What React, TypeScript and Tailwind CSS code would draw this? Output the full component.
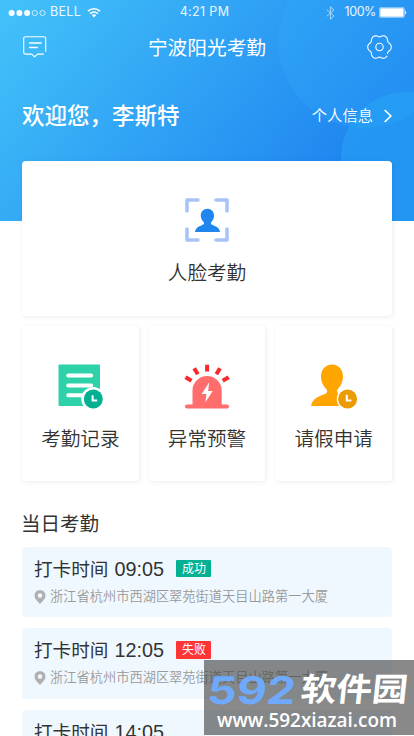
import type { ReactNode } from 'react';
import { clsx } from 'clsx';

interface AttendanceRecord {
  time: string;
  status?: 'success' | 'failed';
  address: string;
}

const ADDRESS = '浙江省杭州市西湖区翠苑街道天目山路第一大厦';

const RECORDS: AttendanceRecord[] = [
  { time: '09:05', status: 'success', address: ADDRESS },
  { time: '12:05', status: 'failed', address: ADDRESS },
  { time: '14:05', address: ADDRESS },
];

const STATUS_LABELS = {
  success: '成功',
  failed: '失败',
};

/* Status bar */
function StatusBar() {
  return (
    <div className="grid h-[25px] grid-cols-[1fr_60px_1fr] items-center pl-2 pr-[7px] text-[12.5px] leading-none text-white/90">
      <div className="flex items-center">
        <svg width="39" height="8" viewBox="0 0 39 8">
          <circle cx="3.6" cy="4" r="3" fill="#fff" />
          <circle cx="11.4" cy="4" r="3" fill="#fff" />
          <circle cx="19.1" cy="4" r="3" fill="#fff" />
          <circle cx="26.8" cy="4" r="2.6" fill="none" stroke="#fff" strokeWidth="0.7" />
          <circle cx="34.5" cy="4" r="2.6" fill="none" stroke="#fff" strokeWidth="0.7" />
        </svg>
        <span className="ml-[3px] tracking-[0.3px]">BELL</span>
        <svg className="ml-[6px]" width="14" height="11" viewBox="0 0 14 11" fill="none" stroke="#fff" strokeWidth="1.7">
          <path d="M1 4.2C4.4.9 9.6.9 13 4.2" />
          <path d="M3.2 6.5C5.4 4.5 8.6 4.5 10.8 6.5" />
          <path d="M4.8 8.1C6 7 8 7 9.2 8.1L7 10.4Z" fill="#fff" stroke="none" />
        </svg>
      </div>
      <span className="-ml-1.5 whitespace-nowrap text-center tracking-[0.35px]">4:21 PM</span>
      <div className="flex items-center justify-end">
        <svg className="mr-[-2px] opacity-60" width="9" height="14" viewBox="0 0 9 14" fill="none" stroke="#fff" strokeWidth="1">
          <path d="M.8 3.8 8 10 4.4 13.2V.8L8 4 .8 10.2" />
        </svg>
        <span className="ml-[11px] tracking-[-0.4px]">100%</span>
        <svg className="ml-[3px]" width="28" height="11" viewBox="0 0 28 11">
          <rect x="0.4" y="0.4" width="25" height="10.2" rx="1.5" fill="none" stroke="#fff" strokeOpacity="0.6" strokeWidth="0.8" />
          <rect x="1.2" y="1.2" width="23.4" height="8.6" rx="0.8" fill="#fff" />
          <path d="M26.2 3.5c1.3.5 1.3 3.5 0 4Z" fill="#fff" />
        </svg>
      </div>
    </div>
  );
}

function MessageIcon() {
  return (
    <svg width="24" height="24" viewBox="0 0 24 24" fill="none" stroke="#fff" strokeLinecap="round" strokeLinejoin="round">
      <path
        d="M22.7 15.2V2.5A1.8 1.8 0 0 0 20.9.7H2.5A1.8 1.8 0 0 0 .7 2.5v13.8A1.8 1.8 0 0 0 2.5 18.1h6.2l2.9 2.7 2.9-2.7h6"
        strokeWidth="1.1"
      />
      <path d="M6.6 7h11.4M6.6 11.4h7.6" strokeWidth="1.5" />
    </svg>
  );
}

// Six soft lobes, left open a little at the lower right
const GEAR_POINTS = Array.from({ length: 117 }, (_, i) => {
  const angle = ((50 + i * 3) * Math.PI) / 180;
  const radius = 10.9 + Math.cos(6 * angle) - 0.15 * Math.cos(12 * angle);
  const x = 12.5 + radius * Math.cos(angle);
  const y = 12 + radius * 1.04 * Math.sin(angle);
  return `${x.toFixed(2)},${y.toFixed(2)}`;
}).join(' ');

function SettingsIcon() {
  return (
    <svg width="25" height="25" viewBox="0 0 25 25" fill="none" stroke="#fff" strokeWidth="1.1" strokeLinecap="round" strokeLinejoin="round">
      <polyline points={GEAR_POINTS} />
      <circle cx="12.5" cy="12" r="3.7" />
    </svg>
  );
}

function FaceScanIcon() {
  return (
    <svg width="46" height="46" viewBox="0 0 46 46" fill="none">
      <path
        d="M3 14V3h11M32 3h11v11M43 32v11H32M14 43H3V32"
        stroke="#a7c4f9"
        strokeWidth="3.6"
        strokeLinecap="round"
        strokeLinejoin="round"
      />
      <path
        d="M23.4 11.7c4 0 6.6 2.9 6.6 6.9 0 2.7-1.1 5-2.7 6.4-.7.7-.6 2 .3 2.500 3.200 1.700 7.300 2.100 8.500 7.600H10.900c1.200-5.500 5.200-5.900 8.400-7.600.9-.5 1-1.800.3-2.500-1.600-1.400-2.800-3.700-2.800-6.400 0-4 2.600-6.900 6.600-6.900Z"
        fill="#1f86f0"
      />
    </svg>
  );
}

function RecordIcon() {
  return (
    <svg width="44" height="45" viewBox="0 0 44 45" className="overflow-visible">
      <rect x="0.5" y="0.5" width="41.5" height="41.5" rx="1" fill="#2ed2a8" />
      <path d="M10.2 11.6h23M10.2 21.5h23M10.2 31.3h14" stroke="#fff" strokeWidth="4" strokeLinecap="round" />
      <circle cx="35.3" cy="35" r="12" fill="#fff" />
      <circle cx="35.3" cy="35" r="9.5" fill="#03b091" />
      <path d="M34.6 31.3v5.2h4.6" stroke="#fff" strokeWidth="2" fill="none" />
    </svg>
  );
}

function AlarmIcon() {
  return (
    <svg width="46" height="45" viewBox="0 0 46 45">
      <path d="M8.5 41V26.5a14.6 14.6 0 0 1 29.2 0V41Z" fill="#ff6d6d" />
      <path d="M3 42.5h40" stroke="#ff6d6d" strokeWidth="4" strokeLinecap="round" />
      <path d="M25.2 18.3 17.7 30h4.7l-.9 8.2L28.7 27h-4.600Z" fill="#fff" />
      <path
        d="M23.1.8v6.6M10.2 4.2l3.6 6M36 4.2l-3.6 6M1.5 13.2l6 3.6M44.7 13.2l-6 3.6"
        stroke="#f92a2e"
        strokeWidth="4"
      />
    </svg>
  );
}

function LeaveIcon() {
  return (
    <svg width="48" height="45" viewBox="0 0 48 45">
      <path
        d="M22 .5c6.700 0 11 5 11 12.300 0 5-2.100 8.900-5 12-1.700 1.900-1.200 3.900.8 4.900 4.500 2.300 10 3.300 12.200 12.300H1c1-7.100 8-10.100 14.200-12 2.400-.8 2.600-3.300.8-5.200-2.900-3.100-5-7-5-12C11 5.500 15.300.5 22 .5Z"
        fill="#ffa500"
      />
      <circle cx="37.6" cy="35" r="10.8" fill="#fff" />
      <circle cx="37.6" cy="35" r="9.5" fill="#eb9c04" />
      <path d="M36.8 30.8v5.6h4.6" stroke="#fff" strokeWidth="2" fill="none" />
    </svg>
  );
}

function PinIcon() {
  return (
    <svg width="12" height="14" viewBox="0 0 12 14">
      <path
        fillRule="evenodd"
        d="M6 0a5.500 5.500 0 0 1 5.500 5.500C11.500 8.500 9 11 6 14 3 11 .5 8.500.5 5.500A5.500 5.500 0 0 1 6 0Zm0 3.300a2.300 2.300 0 1 0 0 4.600 2.300 2.300 0 0 0 0-4.600Z"
        fill="#b0b0b0"
      />
    </svg>
  );
}

interface FeatureCardProps {
  icon: ReactNode;
  label: string;
  className?: string;
}

function FeatureCard({ icon, label, className }: FeatureCardProps) {
  return (
    <button
      type="button"
      className={clsx(
        'flex flex-col items-center rounded-[4px] bg-white font-[350] text-[#333]',
        'shadow-[1px_1px_5px_rgba(0,0,0,0.08)]',
        className
      )}
    >
      <span className="flex h-[46px] items-center">{icon}</span>
      <span className="mt-4 text-[19.6px] leading-[28px]">{label}</span>
    </button>
  );
}

function RecordRow({ time, status, address }: AttendanceRecord) {
  return (
    <li className="h-[70.5px] rounded-[4px] bg-[#f0f8ff] pl-3 pt-[9px]">
      <div className="flex h-[26px] items-center text-[#333]">
        <span className="pt-[2px] text-[18.6px]">打卡时间</span>
        <span className="ml-[6px] w-[50px] pt-[2px] font-['Liberation_Sans',sans-serif] text-[19.8px]">{time}</span>
        {status && (
          <span
            className={clsx(
              'ml-[12px] flex h-[17.5px] w-[35px] items-center justify-center rounded-[1px] text-[12px] text-white',
              status === 'success' ? 'bg-[#03b091]' : 'bg-[#ff3434]'
            )}
          >
            {STATUS_LABELS[status]}
          </span>
        )}
      </div>
      <div className="mt-[5px] flex h-[20px] items-center gap-1 font-[350] text-[#999]">
        <PinIcon />
        <span className="whitespace-nowrap text-[13.24px]">{address}</span>
      </div>
    </li>
  );
}

/* Site stamp over the lower right corner */
function SiteStamp() {
  return (
    <div className="absolute left-[204px] top-[660px] h-[75px] w-[210px] bg-[#444]/[0.63]">
      <svg width="210" height="75" viewBox="0 0 210 75">
        <text
          x="3"
          y="44"
          fontFamily="Inter, sans-serif"
          fontSize="38"
          fontWeight="700"
          fill="#6fa9fb"
          textLength="88"
          lengthAdjust="spacingAndGlyphs"
          transform="translate(4 0) skewX(-6)"
        >
          592
        </text>
        <text
          x="99"
          y="41"
          fontFamily="'Noto Sans CJK SC', sans-serif"
          fontSize="32.5"
          fontWeight="700"
          fill="#fff"
          textLength="107"
          lengthAdjust="spacingAndGlyphs"
          transform="translate(1 0) skewX(-6)"
        >
          软件园
        </text>
        <text
          x="13"
          y="67"
          fontFamily="'Open Sans', sans-serif"
          fontSize="19.5"
          fontWeight="600"
          fill="#fff"
          textLength="180"
          lengthAdjust="spacingAndGlyphs"
        >
          www.592xiazai.com
        </text>
      </svg>
    </div>
  );
}

export default function App() {
  return (
    <div className="relative h-[736px] w-[414px] overflow-hidden bg-white font-['Inter','Noto_Sans_CJK_SC',sans-serif]">
      <header className="relative h-[221px] overflow-hidden bg-[linear-gradient(130deg,#41bff9_5%,#1f86f0_80%)] text-white">
        {/* Background circles */}
        <div className="absolute left-[278px] top-[-45px] size-[173px] rounded-full bg-[#35b0fa]/25" />
        <div className="absolute left-[341px] top-[92px] size-[132px] rounded-full bg-[#28aaf7]/45" />

        <div className="relative">
          <StatusBar />
          <div className="flex h-[45px] items-center justify-between pl-[23px] pr-[22px]">
            <MessageIcon />
            <h1 className="translate-y-px text-[19.7px] font-normal">宁波阳光考勤</h1>
            <SettingsIcon />
          </div>
          <div className="mt-[30px] flex h-8 items-center justify-between pl-[22px] pr-[22px]">
            <p className="text-[22.5px] font-medium">欢迎您，李斯特</p>
            <a className="flex items-center text-[15.3px] font-[350]">
              个人信息
              <svg className="ml-[10px]" width="9" height="14" viewBox="0 0 9 14" fill="none" stroke="#fff" strokeWidth="1.7">
                <path d="m1.7 1 6.200 6-6.200 6" />
              </svg>
            </a>
          </div>
        </div>
      </header>

      <main className="relative -mt-[60px] px-[22px]">
        <FeatureCard icon={<FaceScanIcon />} label="人脸考勤" className="h-[154.5px] w-full pt-[36px]" />
        <div className="mt-[10.5px] grid grid-cols-3 gap-[10px]">
          <FeatureCard icon={<RecordIcon />} label="考勤记录" className="h-[155px] pt-[37px]" />
          <FeatureCard icon={<AlarmIcon />} label="异常预警" className="h-[155px] pt-[37px]" />
          <FeatureCard icon={<LeaveIcon />} label="请假申请" className="h-[155px] pt-[37px]" />
        </div>

        <h2 className="-ml-px mt-[29px] text-[19.5px] leading-[28px] text-[#333]">当日考勤</h2>
        <ul className="mt-[8.5px] space-y-[11px]">
          {RECORDS.map((record) => (
            <RecordRow key={record.time} {...record} />
          ))}
        </ul>
      </main>

      <SiteStamp />
    </div>
  );
}
